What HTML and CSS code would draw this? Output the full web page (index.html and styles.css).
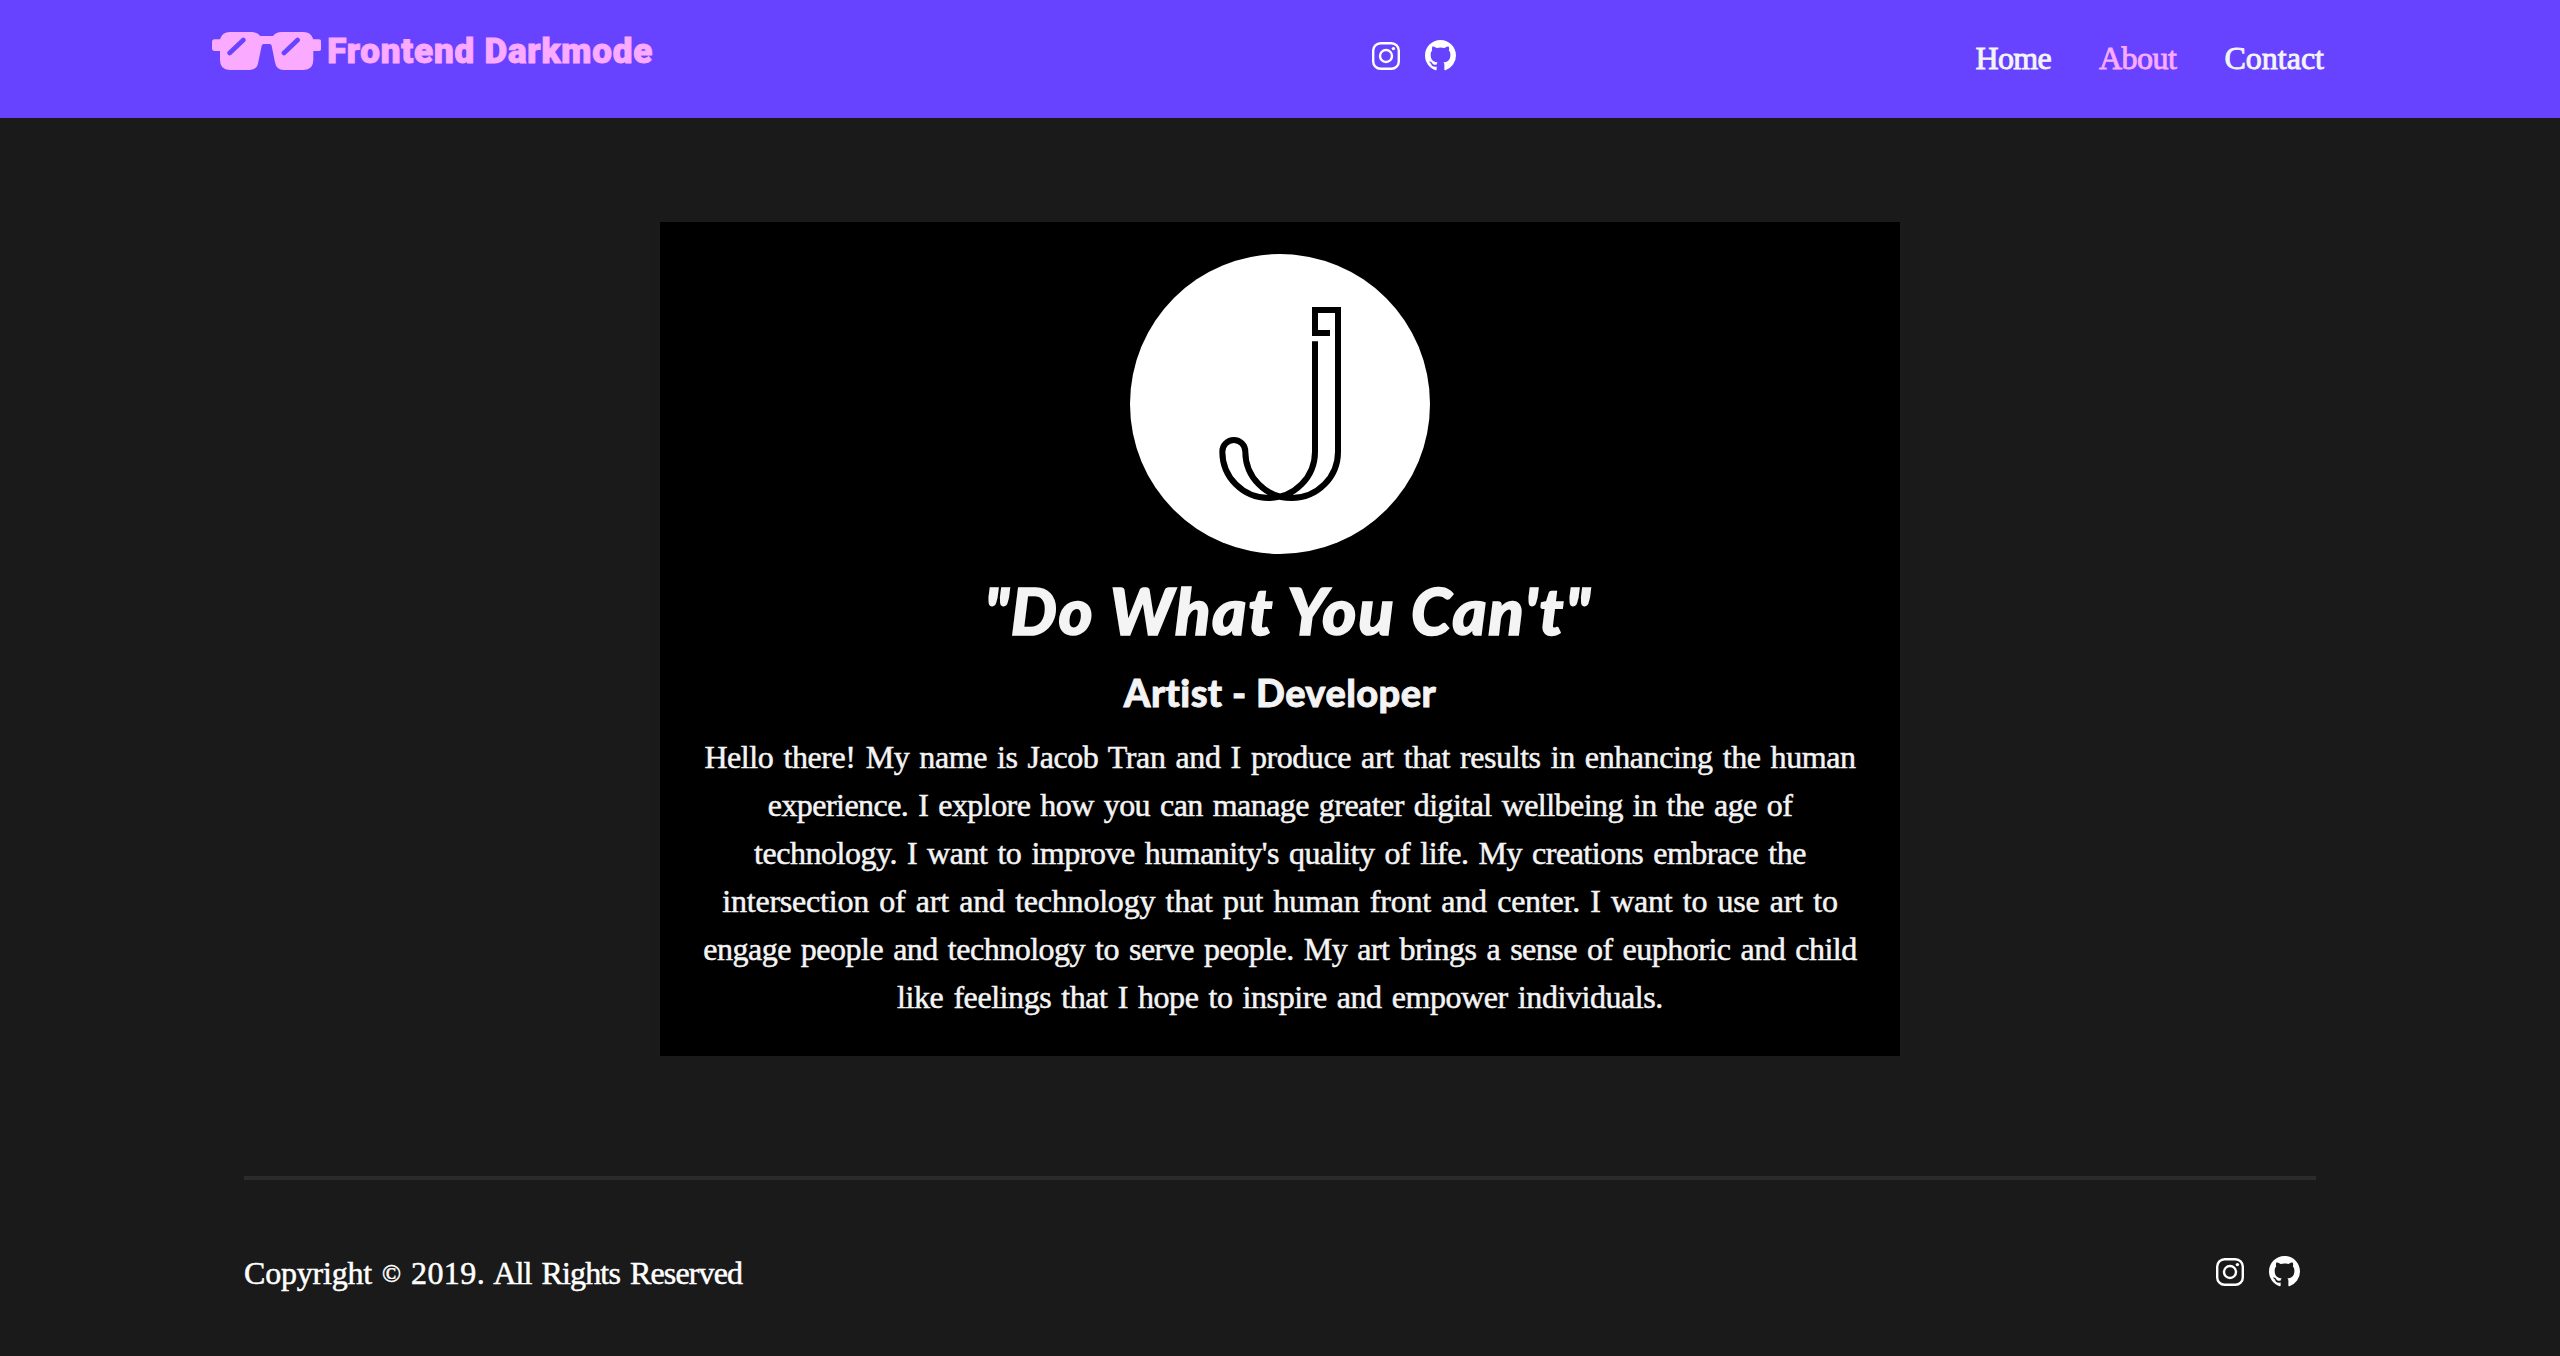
FILE: index.html
```html
<!DOCTYPE html>
<html lang="en">
<head>
<meta charset="utf-8">
<title>Frontend Darkmode - About</title>
<link rel="stylesheet" href="styles.css">
</head>
<body>
<svg class="defs" aria-hidden="true">
  <symbol id="instagram" viewBox="0 0 28 28">
    <rect x="1.2" y="1.2" width="25.6" height="25.6" rx="7.4" fill="none" stroke="currentColor" stroke-width="2.4"/>
    <circle cx="14" cy="14" r="6" fill="none" stroke="currentColor" stroke-width="2.4"/>
    <circle cx="21.4" cy="6.6" r="1.7" fill="currentColor"/>
  </symbol>
  <symbol id="github" viewBox="0 0 16 16">
    <path fill="currentColor" d="M8 0C3.58 0 0 3.58 0 8c0 3.54 2.29 6.53 5.47 7.59.4.07.55-.17.55-.38 0-.19-.01-.82-.01-1.49-2.01.37-2.53-.49-2.69-.94-.09-.23-.48-.94-.82-1.13-.28-.15-.68-.52-.01-.53.63-.01 1.08.58 1.23.82.72 1.21 1.87.87 2.33.66.07-.52.28-.87.51-1.07-1.78-.2-3.64-.89-3.64-3.95 0-.87.31-1.59.82-2.15-.08-.2-.36-1.02.08-2.12 0 0 .67-.21 2.2.82.64-.18 1.32-.27 2-.27.68 0 1.36.09 2 .27 1.53-1.04 2.2-.82 2.2-.82.44 1.1.16 1.92.08 2.12.51.56.82 1.27.82 2.15 0 3.07-1.87 3.75-3.65 3.95.29.25.54.73.54 1.48 0 1.07-.01 1.93-.01 2.2 0 .21.15.46.55.38A8.013 8.013 0 0 0 16 8c0-4.42-3.58-8-8-8z"/>
  </symbol>
</svg>
<header class="header">
  <a class="logo">
    <svg class="logo-glasses" viewBox="21 21 328 114">
      <path fill="#faaaff" d="M21 51Q21 43 29 43H45Q52 21 74 21H140Q157 21 166 33H204Q213 21 230 21H296Q318 21 325 43H341Q349 43 349 51V70Q349 78 341 78H325V105Q325 135 296 135H236Q214 135 210 112L200 62Q199 57 194 57H176Q171 57 170 62L160 112Q156 135 134 135H74Q45 135 45 105V78H29Q21 78 21 70Z"/>
      <path fill="none" stroke="#6743ff" stroke-width="14" stroke-linecap="round" d="M74 84L115 45M237 84L278 45"/>
    </svg>
    <span class="logo-text">Frontend Darkmode</span>
  </a>
  <div class="social">
    <svg class="instagram"><use href="#instagram"/></svg>
    <svg class="github"><use href="#github"/></svg>
  </div>
  <nav class="nav">
    <a class="home">Home</a>
    <a class="active">About</a>
    <a>Contact</a>
  </nav>
</header>
<main class="card">
  <svg class="avatar" viewBox="30 42 900 900">
    <circle cx="480" cy="492" r="450" fill="#fff"/>
    <path fill="none" stroke="#000" stroke-width="18" d="M630 279H585V210H654V635A139 139 0 0 1 376 635A34.5 35 0 0 0 307 635A139 139 0 0 0 585 635V304"/>
  </svg>
  <h1>"Do What You Can't"</h1>
  <h2>Artist - Developer</h2>
  <p class="bio">
    <span class="l1">Hello there! My name is Jacob Tran and I produce art that results in enhancing the human</span>
    <span class="l2">experience. I explore how you can manage greater digital wellbeing in the age of</span>
    <span class="l3">technology. I want to improve humanity's quality of life. My creations embrace the</span>
    <span class="l4">intersection of art and technology that put human front and center. I want to use art to</span>
    <span class="l5">engage people and technology to serve people. My art brings a sense of euphoric and child</span>
    <span class="l6">like feelings that I hope to inspire and empower individuals.</span>
  </p>
</main>
<footer class="footer">
  <p class="copyright"><span class="lead">Copyright</span> <span class="mark">©</span> <span class="year">2019.</span> All Rights Reserved</p>
  <div class="social">
    <svg class="instagram"><use href="#instagram"/></svg>
    <svg class="github"><use href="#github"/></svg>
  </div>
</footer>
</body>
</html>
```
FILE: styles.css
```css
* { box-sizing: border-box; }
body {
  margin: 0;
  height: 1356px;
  overflow: hidden;
  background: #1a1a1a;
  color: #f4f4f4;
  font: 32px/48px "Liberation Serif", serif;
}
svg { display: block; flex: none; }
h1, h2, p { margin: 0; }
.defs { display: none; }

.header {
  display: grid;
  grid-template-columns: 1159.5px 1fr auto;
  align-items: start;
  height: 118px;
  padding: 0 236px 0 212px;
  background: #6743ff;
}
.logo { display: flex; gap: 6px; padding-top: 32px; }
.logo-glasses { width: 109.3px; height: 38px; }
.logo-text {
  padding-top: 1px;
  font: 900 35px/38px Roboto, sans-serif;
  letter-spacing: 0.8px;
  color: #faaaff;
  white-space: nowrap;
  -webkit-text-stroke: 1px #faaaff;
}
.social { display: flex; align-items: center; gap: 25.5px; height: 31px; color: #fff; }
.header .social { margin-top: 40.4px; }
.instagram { width: 28px; height: 28px; }
.github { width: 31px; height: 31px; }

.nav { display: flex; gap: 48px; padding-top: 34px; -webkit-text-stroke: 0.9px; }
.nav .home { letter-spacing: -0.7px; }
.nav .active { letter-spacing: -0.5px; color: #faaaff; }

.card {
  display: flex;
  flex-direction: column;
  align-items: center;
  width: 1240px;
  height: 834px;
  margin: 104px auto 120px;
  padding-top: 32px;
  background: #000;
}
.avatar { width: 300px; height: 300px; }
h1 {
  margin-top: 16px;
  padding-left: 16px;
  font: italic 900 65px/80px Lato, sans-serif;
  letter-spacing: 1.8px;
  -webkit-text-stroke: 1.6px;
}
h2 {
  margin-top: 18px;
  font: 900 38px/48px Lato, sans-serif;
  letter-spacing: 0.4px;
  -webkit-text-stroke: 0.8px;
}
.bio {
  margin-top: 17px;
  text-align: center;
  word-spacing: 2.5px;
  white-space: nowrap;
  -webkit-text-stroke: 0.5px;
}
.bio span { display: block; }
.l1 { letter-spacing: -0.42px; }
.l2 { letter-spacing: -0.55px; }
.l3 { letter-spacing: -0.48px; }
.l4 { letter-spacing: -0.21px; }
.l5 { letter-spacing: -0.5px; }
.l6 { letter-spacing: -0.43px; }

.footer {
  display: flex;
  justify-content: space-between;
  align-items: flex-start;
  margin: 0 244px;
  padding: 69px 16px 0 0;
  border-top: 4px solid #2b2b2b;
  color: #fff;
}
.copyright { word-spacing: 2.8px; letter-spacing: -0.85px; -webkit-text-stroke: 0.5px; }
.lead { letter-spacing: -0.2px; }
.mark { font-size: 25px; line-height: 1; vertical-align: 2px; margin-right: 1px; }
.year { letter-spacing: 0.4px; }
.footer .social { margin-top: 7.3px; }
```
